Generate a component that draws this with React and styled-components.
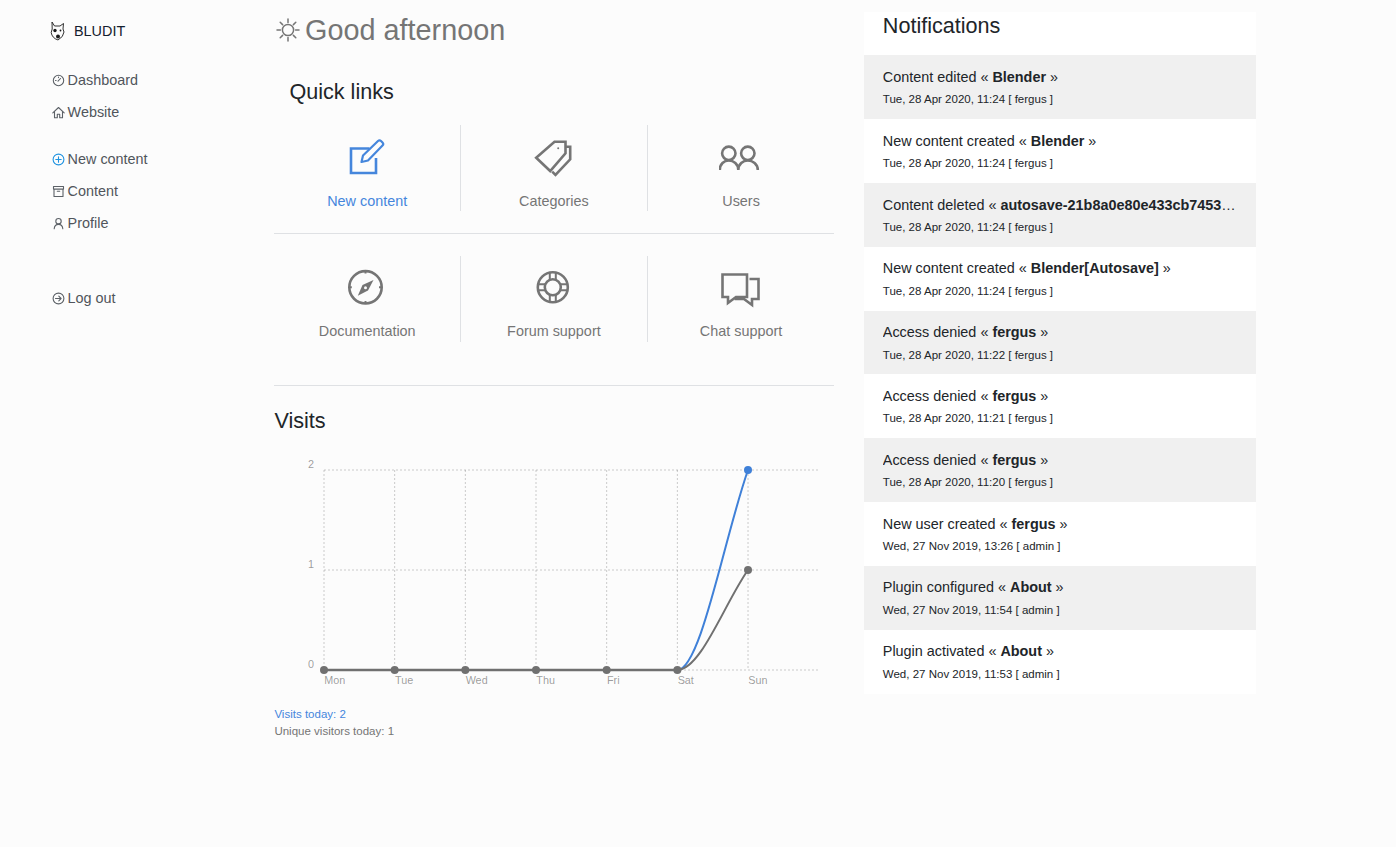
import React from 'react';
import styled, { createGlobalStyle } from 'styled-components';

const GREY = '#757575';
const BLUE = '#4586dc';

const GlobalStyle = createGlobalStyle`
  html, body {
    margin: 0;
    padding: 0;
    background: #fcfcfc;
    font-family: "Liberation Sans", Arial, sans-serif;
    font-size: 14.4px;
    color: #212529;
  }
  * { box-sizing: border-box; }
`;

const Page = styled.div`
  display: flex;
  align-items: flex-start;
  min-height: 847px;
  padding-left: 50px;
  overflow: hidden;
`;

const Sidebar = styled.aside`
  width: 224.4px;
  flex: none;
  padding-top: 21px;
`;

const Logo = styled.div`
  display: flex;
  align-items: center;
  gap: 9px;
  height: 20px;
  margin-bottom: 23px;
  color: #14202e;
`;

const NavGroup = styled.nav`
  display: flex;
  flex-direction: column;
  padding-left: 2px;
  margin-bottom: ${p => p.$gap || 0}px;
`;

const NavItem = styled.a`
  display: flex;
  align-items: center;
  gap: 2.6px;
  height: 32px;
  color: #50555b;
  svg { flex: none; }
`;

const Main = styled.main`
  width: 560px;
  flex: none;
  padding-top: 9px;
`;

const Greeting = styled.div`
  display: flex;
  align-items: center;
  gap: 4.6px;
  height: 42px;
  padding-left: 2.1px;
  margin-bottom: 28px;
  font-size: 28.8px;
  color: ${GREY};
`;

const Heading = styled.h2`
  margin: 0 0 ${p => p.$bottom}px;
  padding-left: ${p => p.$indent || 0}px;
  font-size: 21.6px;
  font-weight: 400;
  line-height: 26px;
  color: #212529;
`;

const LinkRow = styled.div`
  display: grid;
  grid-template-columns: repeat(3, 1fr);
`;

const LinkCell = styled.a`
  display: flex;
  flex-direction: column;
  align-items: center;
  height: 86px;
  padding-top: 13px;
  color: ${p => (p.$active ? BLUE : GREY)};
  border-right: ${p => (p.$last ? 'none' : '1px solid #dfe1e4')};
  svg { display: block; margin-bottom: ${p => p.$iconGap}px; }
`;

const Rule = styled.hr`
  margin: ${p => p.$top}px 0 ${p => p.$bottom}px;
  border: none;
  border-top: 1px solid #dfe1e4;
`;

const Chart = styled.svg`
  display: block;
  margin-top: 21px;
  margin-bottom: 16px;
`;

const Stat = styled.div`
  font-size: 11.52px;
  line-height: 17px;
  color: ${p => (p.$blue ? BLUE : GREY)};
`;

const Panel = styled.section`
  width: 391.6px;
  flex: none;
  margin-top: 12px;
  margin-left: 30px;
  padding: 1px 0 0.7px;
  background: #fff;
`;

const PanelTitle = styled.h2`
  margin: 0 0 16.35px;
  padding-left: 18.4px;
  font-size: 21.6px;
  font-weight: 400;
  line-height: 26px;
  color: #212529;
`;

const Row = styled.div`
  height: 63.8px;
  padding: 10.65px 19px 0 18.4px;
  background: ${p => (p.$shade ? '#f0f0f0' : '#fff')};
`;

const RowTitle = styled.div`
  line-height: 22px;
  white-space: nowrap;
  overflow: hidden;
  text-overflow: ellipsis;
  color: #212529;
`;

const RowDate = styled.div`
  margin-top: 0.35px;
  font-size: 11.52px;
  line-height: 22px;
  color: #212529;
`;

const Small = ({ children, color = '#5c6167' }) => (
  <svg width="13" height="13" viewBox="0 0 13 13" fill="none" stroke={color} strokeWidth="1.1" strokeLinecap="round" strokeLinejoin="round">
    {children}
  </svg>
);

const DogLogo = () => (
  <svg width="15" height="20" viewBox="0 0 15 20" fill="none" stroke="#1a1a1a" strokeWidth="0.9" strokeLinejoin="round">
    <path d="M2 1 L4.5 5 L10 5 L13.5 2.5 L13 8 L14 11 Q13.5 16 8 19 Q2 17 1.2 11.5 L2.2 8 Z" />
    <circle cx="5" cy="9.5" r="1.7" fill="#1a1a1a" stroke="none" />
    <circle cx="10.5" cy="9.5" r="0.9" fill="#1a1a1a" stroke="none" />
    <circle cx="8" cy="15.5" r="2" fill="#1a1a1a" stroke="none" />
  </svg>
);

const Sun = () => (
  <svg width="24" height="24" viewBox="0 0 24 24" fill="none" stroke={GREY} strokeWidth="1.5" strokeLinecap="round">
    <circle cx="12" cy="12" r="5.6" />
    <path d="M12 1v3.4M12 19.6V23M1 12h3.4M19.6 12H23M4.2 4.2l2.4 2.4M17.4 17.4l2.4 2.4M4.2 19.8l2.4-2.4M17.4 6.6l2.4-2.4" />
  </svg>
);

const BigIcon = ({ children, color = GREY }) => (
  <svg width="44" height="40" viewBox="-2 0 44 40" fill="none" stroke={color} strokeWidth="2.6">
    {children}
  </svg>
);

const links = [
  [
    {
      label: 'New content',
      active: true,
      icon: (
        <BigIcon color={BLUE}>
          <path d="M29 20V35H4V10.5H22.5" />
          <path d="M14.5 24l1.5-6.5L31 3q1.5-1.5 3 0l1.5 1.5q1.5 1.5 0 3L21 22.5z" strokeWidth="2.2" strokeLinejoin="round" />
        </BigIcon>
      ),
    },
    {
      label: 'Categories',
      icon: (
        <BigIcon>
          <path d="M2.2 19.7L20.5 3.7H31.5V15.3L16.2 33z" />
          <path d="M31.5 8.7h4.7v12.6L21.5 37l-3.3-3.3" />
          <circle cx="24.2" cy="10.3" r="1" fill={GREY} stroke="none" />
        </BigIcon>
      ),
    },
    {
      label: 'Users',
      last: true,
      icon: (
        <BigIcon>
          <circle cx="7.8" cy="15.3" r="6.7" />
          <circle cx="26.8" cy="15.3" r="6.7" />
          <path d="M-1.2 32C-1.2 26 3 22.5 7.8 22.5S17.3 26 17.3 32C17.3 26 22 22.5 26.8 22.5S36.8 26 36.8 32" />
        </BigIcon>
      ),
    },
  ],
  [
    {
      label: 'Documentation',
      icon: (
        <BigIcon>
          <circle cx="18.5" cy="18.3" r="16.2" />
          <path d="M26.5 11L21 21.5 10.8 26.7 15.5 16z" fill={GREY} stroke="none" />
          <circle cx="18.5" cy="18.8" r="1.5" fill="#fcfcfc" stroke="none" />
          <path d="M18.5 2v2.5M18.5 32v2.5M2.3 18.3h2.5M32 18.3h2.5" strokeWidth="2" />
        </BigIcon>
      ),
    },
    {
      label: 'Forum support',
      icon: (
        <BigIcon>
          <circle cx="18.8" cy="18.3" r="15" />
          <circle cx="18.8" cy="18.3" r="8" />
          <path d="M15.8 3.5v7.5M21.8 3.5v7.5M15.8 25.5v7.5M21.8 25.5v7.5M4 15.3h7.5M4 21.3h7.5M26 15.3h7.5M26 21.3h7.5" strokeWidth="2" />
        </BigIcon>
      ),
    },
    {
      label: 'Chat support',
      last: true,
      icon: (
        <BigIcon>
          <path d="M1.5 5.5H26V28H15L7 34V28H1.5z" />
          <path d="M28.5 10H37.5V30H31V36L23 30H13.5" />
        </BigIcon>
      ),
    },
  ],
];

const notifications = [
  ['Content edited', 'Blender', 'Tue, 28 Apr 2020, 11:24 [ fergus ]'],
  ['New content created', 'Blender', 'Tue, 28 Apr 2020, 11:24 [ fergus ]'],
  ['Content deleted', 'autosave-21b8a0e80e433cb74538', 'Tue, 28 Apr 2020, 11:24 [ fergus ]'],
  ['New content created', 'Blender[Autosave]', 'Tue, 28 Apr 2020, 11:24 [ fergus ]'],
  ['Access denied', 'fergus', 'Tue, 28 Apr 2020, 11:22 [ fergus ]'],
  ['Access denied', 'fergus', 'Tue, 28 Apr 2020, 11:21 [ fergus ]'],
  ['Access denied', 'fergus', 'Tue, 28 Apr 2020, 11:20 [ fergus ]'],
  ['New user created', 'fergus', 'Wed, 27 Nov 2019, 13:26 [ admin ]'],
  ['Plugin configured', 'About', 'Wed, 27 Nov 2019, 11:54 [ admin ]'],
  ['Plugin activated', 'About', 'Wed, 27 Nov 2019, 11:53 [ admin ]'],
];

const days = ['Mon', 'Tue', 'Wed', 'Thu', 'Fri', 'Sat', 'Sun'];
const xAt = i => 50 + i * 70.67;

const VisitsChart = () => (
  <Chart width="560" height="235" viewBox="0 0 560 235">
    <g stroke="rgba(0,0,0,0.2)" strokeWidth="1" strokeDasharray="2 2">
      {days.map((d, i) => (
        <line key={d} x1={xAt(i)} x2={xAt(i)} y1="15" y2="215" />
      ))}
      {[15, 115, 215].map(y => (
        <line key={y} x1="50" x2="544.7" y1={y} y2={y} />
      ))}
    </g>
    <g fontSize="10.8" fill="rgba(0,0,0,0.4)" fontFamily="Liberation Sans, Arial, sans-serif">
      {[['2', 13], ['1', 113], ['0', 213]].map(([t, y]) => (
        <text key={t} x="40" y={y} textAnchor="end">{t}</text>
      ))}
      {days.map((d, i) => (
        <text key={d} x={xAt(i) + 0.3} y="229">{d}</text>
      ))}
    </g>
    <path d="M403.3 215C426.8 215 450.5 81.7 474 15" fill="none" stroke="#3f80d8" strokeWidth="2" />
    <circle cx="474" cy="15" r="4" fill="#3f80d8" />
    <path d="M50 215H403.3" fill="none" stroke="#707070" strokeWidth="2.4" />
    <path d="M403.3 215C426.8 215 450.5 148.3 474 115" fill="none" stroke="#707070" strokeWidth="2" />
    {days.map((d, i) => (
      <circle key={d} cx={xAt(i)} cy={i === 6 ? 115 : 215} r="4" fill="#707070" />
    ))}
  </Chart>
);

const App = () => (
  <Page>
    <GlobalStyle />
    <Sidebar>
      <Logo>
        <DogLogo />
        BLUDIT
      </Logo>
      <NavGroup $gap={15}>
        <NavItem>
          <Small>
            <circle cx="6.5" cy="6.5" r="5.2" />
            <path d="M6 7.2L8.5 4.5M3.5 6.5h.6M6.5 3v.6" />
          </Small>
          Dashboard
        </NavItem>
        <NavItem>
          <Small>
            <path d="M.8 6.8L6.5 1.5l5.7 5.3M2.5 5.8v6h2.8V8.3h2.4v3.5h2.8v-6" />
          </Small>
          Website
        </NavItem>
      </NavGroup>
      <NavGroup $gap={43}>
        <NavItem>
          <Small color="#1f93e0">
            <circle cx="6.5" cy="6.5" r="5.4" />
            <path d="M6.5 3.8v5.4M3.8 6.5h5.4" />
          </Small>
          New content
        </NavItem>
        <NavItem>
          <Small>
            <path d="M1.5 1.5h10v2.6h-10zM2 4.1v7.4h9V4.1M5.3 6.2h2.4" />
          </Small>
          Content
        </NavItem>
        <NavItem>
          <Small>
            <circle cx="6.5" cy="4.2" r="2.7" />
            <path d="M2.2 11.8c.2-2.6 2-4.4 4.3-4.4s4.1 1.8 4.3 4.4" />
          </Small>
          Profile
        </NavItem>
      </NavGroup>
      <NavGroup>
        <NavItem>
          <Small>
            <circle cx="6.5" cy="6.5" r="5.4" />
            <path d="M3.5 6.5h5.6M6.8 4.2l2.3 2.3-2.3 2.3" />
          </Small>
          Log out
        </NavItem>
      </NavGroup>
    </Sidebar>

    <Main>
      <Greeting>
        <Sun />
        Good afternoon
      </Greeting>
      <Heading $indent={15} $bottom={20}>Quick links</Heading>
      {links.map((row, r) => (
        <React.Fragment key={r}>
          <LinkRow>
            {row.map(l => (
              <LinkCell key={l.label} $active={l.active} $last={l.last} $iconGap={r === 0 ? 15 : 14}>
                {l.icon}
                {l.label}
              </LinkCell>
            ))}
          </LinkRow>
          <Rule $top={r === 0 ? 22 : 43} $bottom={22} />
        </React.Fragment>
      ))}
      <Heading $bottom={0}>Visits</Heading>
      <VisitsChart />
      <Stat $blue>Visits today: 2</Stat>
      <Stat>Unique visitors today: 1</Stat>
    </Main>

    <Panel>
      <PanelTitle>Notifications</PanelTitle>
      {notifications.map(([what, name, date], i) => (
        <Row key={i} $shade={i % 2 === 0}>
          <RowTitle>
            {what} « <b>{name}</b> »
          </RowTitle>
          <RowDate>{date}</RowDate>
        </Row>
      ))}
    </Panel>
  </Page>
);

export default App;
